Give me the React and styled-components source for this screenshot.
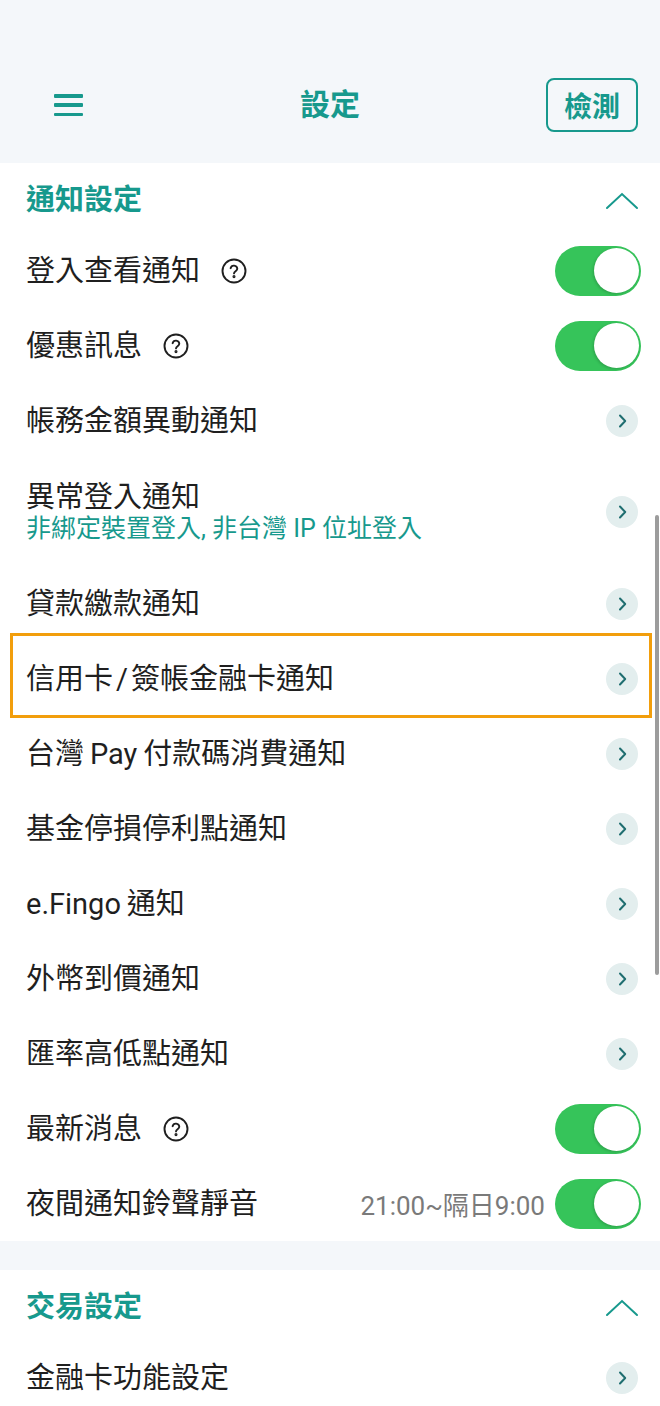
import React from "react";
import styled, { createGlobalStyle } from "styled-components";

const TEAL = "#17998d";

const GlobalStyle = createGlobalStyle`
	body {
		margin: 0;
		background: #ffffff;
		font-family: Roboto, "Noto Sans CJK TC", sans-serif;
		color: #1f1f1f;
	}
`;

// hair spaces between CJK and latin parts, as on the phone
const notifyRows = [
	{ label: "登入查看通知", kind: "toggle", help: true },
	{ label: "優惠訊息", kind: "toggle", help: true },
	{ label: "帳務金額異動通知", kind: "link" },
	{ label: "異常登入通知", sub: "非綁定裝置登入, 非台灣 IP 位址登入", kind: "link" },
	{ label: "貸款繳款通知", kind: "link" },
	{ label: "信用卡\u200a/\u200a簽帳金融卡通知", kind: "link", marked: true },
	{ label: "台灣\u2009Pay\u2009付款碼消費通知", kind: "link" },
	{ label: "基金停損停利點通知", kind: "link" },
	{ label: "e.Fingo\u2009通知", kind: "link" },
	{ label: "外幣到價通知", kind: "link" },
	{ label: "匯率高低點通知", kind: "link" },
	{ label: "最新消息", kind: "toggle", help: true },
	{ label: "夜間通知鈴聲靜音", kind: "toggle", note: "21:00~隔日9:00" },
];

const tradeRows = [{ label: "金融卡功能設定", kind: "link" }];

const HelpIcon = () => (
	<svg width="26" height="26" viewBox="0 0 26 26" fill="none" stroke="#1f1f1f" strokeWidth="1.9" strokeLinecap="round">
		<circle cx="13" cy="13" r="11.5" />
		<path d="M9.6 10.2a3.4 3.4 0 0 1 6.7 0.6c0 2.2-3.3 2.6-3.3 4.6" />
		<circle cx="13" cy="18.6" r="0.6" fill="#1f1f1f" />
	</svg>
);

const Chevron = ({ up }) =>
	up ? (
		<svg width="34" height="18" viewBox="0 0 34 18" fill="none" stroke={TEAL} strokeWidth="2" strokeLinecap="round">
			<path d="M2 16 L17 2 L32 16" />
		</svg>
	) : (
		<svg width="9" height="14" viewBox="0 0 9 14" fill="none" stroke="#1f6e70" strokeWidth="2" strokeLinecap="round" strokeLinejoin="round">
			<path d="M2 1.5 L7.2 7 L2 12.5" />
		</svg>
	);

const Row = ({ item }) => (
	<RowBox $tall={!!item.sub} $marked={item.marked}>
		<Labels>
			<Label>
				{item.label}
				{item.help && (
					<HelpWrap>
						<HelpIcon />
					</HelpWrap>
				)}
			</Label>
			{item.sub && <SubLabel>{item.sub}</SubLabel>}
		</Labels>
		<Trail>
			{item.note && <Note>{item.note}</Note>}
			{item.kind === "toggle" ? (
				<Toggle>
					<Knob />
				</Toggle>
			) : (
				<ArrowDot>
					<Chevron />
				</ArrowDot>
			)}
		</Trail>
	</RowBox>
);

const Section = ({ title, rows }) => (
	<Block>
		<SectionHead>
			<SectionTitle>{title}</SectionTitle>
			<Chevron up />
		</SectionHead>
		{rows.map((item, idx) => (
			<Row item={item} key={idx} />
		))}
	</Block>
);

const App = () => {
	return (
		<Page>
			<GlobalStyle />
			<Header>
				<Burger aria-label="menu">
					<span />
					<span />
					<span />
				</Burger>
				<Title>設定</Title>
				<CheckButton>檢測</CheckButton>
			</Header>
			<Section title="通知設定" rows={notifyRows} />
			<Gap />
			<Section title="交易設定" rows={tradeRows} />
			<ScrollThumb />
		</Page>
	);
};

const Page = styled.div`
	position: relative;
	width: 660px;
	height: 1406px;
	overflow: hidden;
	background: #ffffff;
`;

const Header = styled.header`
	display: grid;
	grid-template-columns: 1fr auto 1fr;
	align-items: center;
	height: 163px;
	box-sizing: border-box;
	padding: 78px 22px 31px 22px;
	background: #f4f7fa;
`;

const Burger = styled.div`
	display: flex;
	flex-direction: column;
	justify-content: space-between;
	width: 29px;
	height: 22px;
	margin-left: 32px;

	span {
		display: block;
		height: 3.5px;
		border-radius: 1px;
		background: ${TEAL};
	}
`;

const Title = styled.h1`
	margin: 0;
	font-size: 30px;
	font-weight: 700;
	line-height: 1;
	color: ${TEAL};
`;

const CheckButton = styled.div`
	justify-self: end;
	display: flex;
	align-items: center;
	justify-content: center;
	width: 92px;
	height: 54px;
	box-sizing: border-box;
	border: 2px solid ${TEAL};
	border-radius: 8px;
	font-size: 28px;
	font-weight: 700;
	color: ${TEAL};
`;

const Block = styled.section`
	background: #ffffff;
`;

const SectionHead = styled.div`
	display: flex;
	align-items: center;
	justify-content: space-between;
	height: 70px;
	box-sizing: border-box;
	padding: 5px 21px 0 26px;
`;

const SectionTitle = styled.h2`
	margin: 0;
	font-size: 29px;
	font-weight: 700;
	line-height: 1;
	color: ${TEAL};
`;

const RowBox = styled.div`
	position: relative;
	display: flex;
	align-items: center;
	justify-content: space-between;
	height: ${(p) => (p.$tall ? "108px" : "75px")};
	padding: 0 19px 0 26px;

	${(p) =>
		p.$marked &&
		`
		&::after {
			content: "";
			position: absolute;
			top: -8px;
			bottom: -2px;
			left: 10px;
			right: 8px;
			border: 3px solid #f29e0c;
			pointer-events: none;
		}
	`}
`;

const Labels = styled.div`
	display: flex;
	flex-direction: column;
`;

const Label = styled.div`
	display: flex;
	align-items: center;
	font-size: 29px;
	line-height: 34px;
	color: #1f1f1f;
`;

const HelpWrap = styled.span`
	display: flex;
	margin-left: 21px;
`;

const SubLabel = styled.div`
	font-size: 25px;
	line-height: 30px;
	color: ${TEAL};
`;

const Trail = styled.div`
	display: flex;
	align-items: center;
	gap: 10px;
`;

const Note = styled.span`
	font-size: 26px;
	color: #7a7a7a;
`;

const Toggle = styled.div`
	display: flex;
	align-items: center;
	justify-content: flex-end;
	width: 86px;
	height: 50px;
	box-sizing: border-box;
	padding: 2.5px;
	border-radius: 25px;
	background: #36c45a;
`;

const Knob = styled.div`
	width: 45px;
	height: 45px;
	border-radius: 50%;
	background: #ffffff;
	box-shadow: -1px 1px 3px rgba(0, 0, 0, 0.18);
`;

const ArrowDot = styled.div`
	display: flex;
	align-items: center;
	justify-content: center;
	width: 32px;
	height: 32px;
	margin-right: 3px;
	border-radius: 50%;
	background: #e3eeee;
`;

const Gap = styled.div`
	height: 29px;
	background: #f4f7fa;
`;

const ScrollThumb = styled.div`
	position: absolute;
	top: 515px;
	right: 1px;
	width: 4px;
	height: 460px;
	border-radius: 2px;
	background: #9c9c9c;
`;

export default App;
